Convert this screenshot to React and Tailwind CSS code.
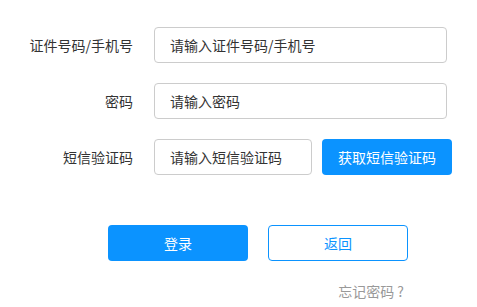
export default function App() {
    const font = { fontFamily: "'Noto Sans CJK SC', 'Noto Sans', sans-serif" };
    return (
        <div className="w-[477px] h-[307px] bg-white pt-[27px] text-[14px]" style={font}>
            {/* Form rows */}
            <div className="flex flex-col gap-[20px]">
                <div className="flex items-center">
                    <label className="w-[133px] text-right text-[#333]">证件号码/手机号</label>
                    <input
                        placeholder="请输入证件号码/手机号"
                        className="ml-[21px] w-[293px] h-[36px] border border-[#cccccc] rounded-[4px] pl-[15px] outline-none placeholder:text-[#333]"
                        style={font}
                    />
                </div>
                <div className="flex items-center">
                    <label className="w-[133px] text-right text-[#333]">密码</label>
                    <input
                        type="password"
                        placeholder="请输入密码"
                        className="ml-[21px] w-[293px] h-[36px] border border-[#cccccc] rounded-[4px] pl-[15px] outline-none placeholder:text-[#333]"
                        style={font}
                    />
                </div>
                <div className="flex items-center">
                    <label className="w-[133px] text-right text-[#333]">短信验证码</label>
                    <input
                        placeholder="请输入短信验证码"
                        className="ml-[21px] w-[158px] h-[36px] border border-[#cccccc] rounded-[4px] pl-[15px] outline-none placeholder:text-[#333]"
                        style={font}
                    />
                    <button className="ml-[10px] w-[130px] h-[36px] rounded-[4px] bg-[#0b93ff] text-white">获取短信验证码</button>
                </div>
            </div>

            {/* Actions */}
            <div className="flex gap-[20px] pl-[108px] mt-[50px]">
                <button className="w-[140px] h-[36px] rounded-[4px] bg-[#0b93ff] text-white">登录</button>
                <button className="w-[140px] h-[36px] rounded-[4px] border border-[#0b93ff] text-[#0b93ff] bg-white">返回</button>
            </div>
            <div className="w-[404px] text-right mt-[23px] text-[#999] leading-[14px]">忘记密码 ?</div>
        </div>
    );
}
